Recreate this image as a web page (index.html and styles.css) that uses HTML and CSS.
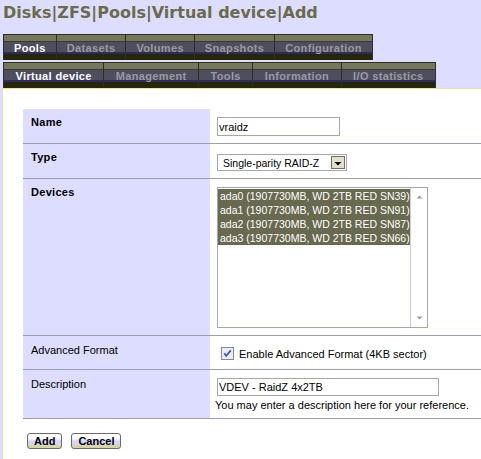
FILE: index.html
```html
<!DOCTYPE html>
<html>
<head>
<meta charset="utf-8">
<title>Disks|ZFS|Pools|Virtual device|Add</title>
<link rel="stylesheet" href="styles.css">
</head>
<body>
<h1 class="title">Disks|ZFS|Pools|Virtual device|Add</h1>
<nav class="tabs">
  <ul class="tabrow">
    <li class="tab active">Pools</li>
    <li class="tab">Datasets</li>
    <li class="tab">Volumes</li>
    <li class="tab">Snapshots</li>
    <li class="tab">Configuration</li>
  </ul>
  <ul class="tabrow sub">
    <li class="tab active">Virtual device</li>
    <li class="tab">Management</li>
    <li class="tab">Tools</li>
    <li class="tab">Information</li>
    <li class="tab">I/O statistics</li>
  </ul>
</nav>
<main class="content">
  <table class="form">
    <colgroup><col class="col-label"><col></colgroup>
    <tr>
      <td class="lbl">Name</td>
      <td class="val"><input class="text name-input" type="text" value="vraidz"></td>
    </tr>
    <tr>
      <td class="lbl">Type</td>
      <td class="val">
        <div class="select">
          <span class="sel-value">Single-parity RAID-Z</span>
          <span class="sel-btn"><svg width="12" height="11" viewBox="0 0 12 11"><polygon points="2.5,5 9.5,5 6,8.5" fill="#000"/></svg></span>
        </div>
      </td>
    </tr>
    <tr>
      <td class="lbl">Devices</td>
      <td class="val">
        <div class="listbox">
          <ul class="options">
            <li class="opt">ada0 (1907730MB, WD 2TB RED SN39)</li>
            <li class="opt">ada1 (1907730MB, WD 2TB RED SN91)</li>
            <li class="opt">ada2 (1907730MB, WD 2TB RED SN87)</li>
            <li class="opt">ada3 (1907730MB, WD 2TB RED SN66)</li>
          </ul>
          <div class="scroll">
            <svg width="7" height="4" viewBox="0 0 7 4"><polygon points="0.5,3.5 6.5,3.5 3.5,0.5" fill="#9a9aa4"/></svg>
            <svg width="7" height="4" viewBox="0 0 7 4"><polygon points="0.5,0.5 6.5,0.5 3.5,3.5" fill="#9a9aa4"/></svg>
          </div>
        </div>
      </td>
    </tr>
    <tr>
      <td class="lbl plain">Advanced Format</td>
      <td class="val">
        <label class="check">
          <svg class="cb" width="13" height="13" viewBox="0 0 13 13"><rect x="0.5" y="0.5" width="12" height="12" fill="#ececf4" stroke="#8585a8"/><path d="M3.2 6.2 L5.2 8.8 L9.8 3.4" fill="none" stroke="#4457b5" stroke-width="1.8"/></svg>
          <span>Enable Advanced Format (4KB sector)</span>
        </label>
      </td>
    </tr>
    <tr>
      <td class="lbl plain">Description</td>
      <td class="val desc">
        <input class="text desc-input" type="text" value="VDEV - RaidZ 4x2TB">
        <div class="hint">You may enter a description here for your reference.</div>
      </td>
    </tr>
  </table>
  <div class="buttons">
    <button class="btn" type="button">Add</button>
    <button class="btn" type="button">Cancel</button>
  </div>
</main>
</body>
</html>
```
FILE: styles.css
```css
html, body {
  margin: 0;
  padding: 0;
  background: #ddddff;
}
body {
  font-family: "Liberation Sans", Arial, sans-serif;
  font-size: 11px;
  color: #000;
}

.title {
  margin: 0 0 12px 0;
  padding: 4px 0 0 3px;
  height: 18px;
  font: bold 16px/18px "DejaVu Sans", Verdana, sans-serif;
  color: #6b6b4b;
  white-space: nowrap;
}

.tabs {
  margin-left: 3px;
}
.tabrow {
  display: flex;
  width: max-content;
  list-style: none;
  margin: 0;
  padding: 0;
  border-left: 1px solid #2e2e26;
}
.tabrow + .tabrow {
  margin-top: 2px;
}
.tab {
  box-sizing: border-box;
  height: 26px;
  padding: 6px 10px 0;
  line-height: 14px;
  font-weight: bold;
  letter-spacing: 0.35px;
  color: #9a9a9e;
  border-top: 1px solid #2e2e26;
  border-right: 1px solid #2e2e26;
  background: linear-gradient(to bottom,
    #76765a 0, #76765a 6px,
    #3a3a30 6px, #3a3a30 7px,
    #4e4e5e 7px, #4e4e5e 17px,
    #2c2c5e 17px, #2c2c5e 19px,
    #262608 19px, #262608 25px);
}
.tabrow.sub .tab {
  padding: 6px 11.5px 0;
}
.tab.active {
  color: #ffffff;
}

.content {
  margin-left: 2px;
  border-top: 1px solid #e9e4a4;
  border-left: 1px solid #e9e4a4;
  background: #fff;
  padding: 20px 0 20px 20px;
}

.form {
  width: 100%;
  border-collapse: collapse;
  table-layout: fixed;
}
.col-label {
  width: 187px;
}
.form td {
  border-bottom: 1px solid #9c9cb2;
  vertical-align: top;
  padding: 8px 5px 7px;
}
.form td.lbl {
  background: #ddddff;
  padding: 6px 8px 0;
  line-height: 14px;
  font-weight: bold;
  letter-spacing: 0.3px;
}
.form td.lbl.plain {
  font-weight: normal;
  letter-spacing: 0;
  padding-top: 7px;
}

.text {
  box-sizing: border-box;
  display: block;
  margin: 0 0 0 2px;
  padding: 0 1px;
  border: 1px solid #a4a8ac;
  font: 11px "Liberation Sans", Arial, sans-serif;
  color: #000;
  background: #fff;
  outline: none;
}
.name-input {
  width: 123px;
  height: 19px;
}
.desc-input {
  width: 222px;
  height: 18px;
}

.select {
  box-sizing: border-box;
  display: flex;
  align-items: center;
  width: 130px;
  height: 17px;
  margin: 2px 0 0 2px;
  border: 1px solid #a4a8ac;
  background: #fff;
}
.sel-value {
  padding-left: 5px;
  font-size: 10.5px;
  white-space: nowrap;
}
.sel-btn {
  box-sizing: border-box;
  display: flex;
  align-items: center;
  justify-content: center;
  margin-left: auto;
  margin-right: 1px;
  width: 14px;
  height: 13px;
  border: 1px solid #6d6d6d;
  background: #e4e0c8;
}

.listbox {
  box-sizing: border-box;
  display: flex;
  width: 211px;
  height: 141px;
  margin-left: 2px;
  border: 1px solid #a4a8ac;
  background: #fff;
}
.options {
  flex: 1;
  list-style: none;
  margin: 0;
  padding: 1px 0 0;
}
.opt {
  background: #69694f;
  color: #fff;
  height: 14px;
  line-height: 14px;
  padding-left: 2px;
  font-size: 10.5px;
  white-space: nowrap;
}
.scroll {
  box-sizing: border-box;
  width: 17px;
  border-left: 1px solid #c8c8f0;
  display: flex;
  flex-direction: column;
  justify-content: space-between;
  align-items: center;
  padding: 7px 0 7px;
}

.check {
  display: flex;
  align-items: center;
  height: 17px;
  margin-top: 1px;
}
.cb {
  display: block;
  margin-left: 6px;
  margin-right: 5px;
}

.val.desc {
  padding-bottom: 6px;
}
.hint {
  margin-top: 2px;
  line-height: 14px;
}

.buttons {
  display: flex;
  gap: 9px;
  margin: 14px 0 0 4px;
}
.btn {
  box-sizing: border-box;
  height: 16px;
  padding: 0 6px;
  margin: 0;
  border: 1px solid #6a6a6a;
  border-radius: 3px;
  font: bold 11px/14px "Liberation Sans", Arial, sans-serif;
  color: #000;
  background: linear-gradient(to bottom, #ffffff 0, #ffffff 30%, #d6d6f8 50%, #d6d6f8 72%, #d8d49c 88%, #d8d49c 100%);
}
```
